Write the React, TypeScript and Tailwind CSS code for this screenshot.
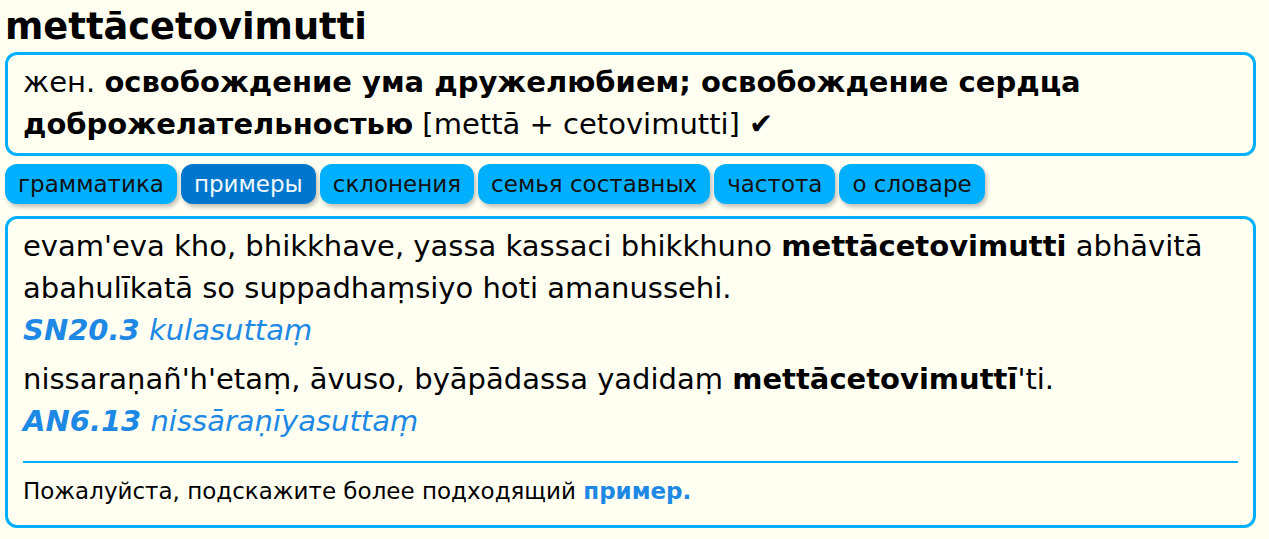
import React from 'react';

const tabs = ['грамматика', 'примеры', 'склонения', 'семья составных', 'частота', 'о словаре'];

export default function App() {
  return (
    <div className="min-h-screen bg-[#fffff2] text-black pl-[5px] pr-[13px] pt-[3px]" style={{ fontFamily: '"DejaVu Sans", sans-serif' }}>
      <h1 className="text-[36.8px] font-bold leading-[48px]">mettācetovimutti</h1>

      <div className="mt-[1px] border-[3px] border-[#00b0ff] rounded-[12px] px-[15px] pt-[6px] pb-[8px] text-[29px] leading-[42px]">
        жен. <b>освобождение ума дружелюбием; освобождение сердца доброжелательностью</b> [mettā + cetovimutti] ✔
      </div>

      <div className="flex gap-[4px] mt-[8px]">
        {tabs.map((t) => (
          <button
            key={t}
            className={`h-[40px] px-[13px] rounded-[12px] text-[23px] leading-[40px] shadow-[2px_3px_4px_rgba(0,0,0,0.25)] ${
              t === 'примеры' ? 'bg-[#0077cc] text-[#f0f8ff]' : 'bg-[#00b0ff] text-[#111]'
            }`}
          >
            {t}
          </button>
        ))}
      </div>

      <div className="mt-[12px] border-[3px] border-[#00b0ff] rounded-[12px] px-[15px] pt-[6px] pb-[18px] text-[29px] leading-[42px]">
        <div>
          evam'eva kho, bhikkhave, yassa kassaci bhikkhuno <b>mettācetovimutti</b> abhāvitā abahulīkatā so suppadhaṃsiyo hoti amanussehi.
        </div>
        <div className="text-[#1e88e5] italic">
          <b>SN20.3</b> kulasuttaṃ
        </div>
        <div className="mt-[7px]">
          nissaraṇañ'h'etaṃ, āvuso, byāpādassa yadidaṃ <b>mettācetovimuttī</b>'ti.
        </div>
        <div className="text-[#1e88e5] italic">
          <b>AN6.13</b> nissāraṇīyasuttaṃ
        </div>
        <div className="border-t-2 border-[#00b0ff] mt-[19px] pt-[12px] text-[23px] leading-[32px]">
          Пожалуйста, подскажите более подходящий <b className="text-[#1e88e5]">пример.</b>
        </div>
      </div>
    </div>
  );
}
